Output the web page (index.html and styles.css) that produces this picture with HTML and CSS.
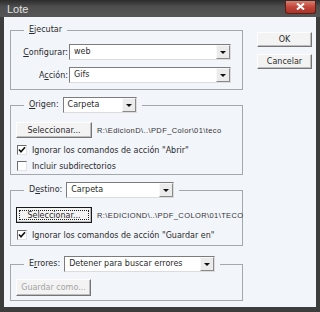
FILE: index.html
```html
<!DOCTYPE html>
<html lang="es">
<head>
    <meta charset="UTF-8">
    <title>Lote</title>
    <link rel="stylesheet" href="styles.css">
</head>
<body>
    <div class="window">
        <div class="titlebar">
            <span class="title">Lote</span>
            <span class="close">
                <svg width="9" height="7" viewBox="0 0 9 7"><path d="M1 0.5 L8 6.5 M8 0.5 L1 6.5" stroke="#fff" stroke-width="2"/></svg>
            </span>
        </div>

        <div class="client">
            <div class="groups">
                <fieldset class="group g-run">
                    <legend><span><u>E</u>jecutar</span></legend>
                    <div class="row">
                        <span class="lbl"><u>C</u>onfigurar:</span>
                        <div class="combo c-run"><span class="val">web</span><span class="arrow"></span></div>
                    </div>
                    <div class="row">
                        <span class="lbl">A<u>c</u>ción:</span>
                        <div class="combo c-run"><span class="val">Gifs</span><span class="arrow"></span></div>
                    </div>
                </fieldset>

                <fieldset class="group g-src">
                    <legend>
                        <span><u>O</u>rigen:</span>
                        <div class="combo c-src"><span class="val">Carpeta</span><span class="arrow"></span></div>
                    </legend>
                    <div class="pick">
                        <button class="btn b-pick">Seleccionar...</button>
                        <span class="path">R:\EdicionD\..\PDF_Color\01\teco</span>
                    </div>
                    <div class="check"><span class="box on"><svg width="8" height="8" viewBox="0 0 8 8"><path d="M1 3.5 L3 5.8 L7 1.2" stroke="#111" stroke-width="1.6" fill="none"/></svg></span><span>Ignorar los comandos de acción "Abrir"</span></div>
                    <div class="check"><span class="box"></span><span>Incluir subdirectorios</span></div>
                </fieldset>

                <fieldset class="group g-dst">
                    <legend>
                        <span>D<u>e</u>stino:</span>
                        <div class="combo c-dst"><span class="val">Carpeta</span><span class="arrow"></span></div>
                    </legend>
                    <div class="pick">
                        <button class="btn b-pick focus">Seleccionar...</button>
                        <span class="path">R:\EDICIOND\..\PDF_COLOR\01\TECO</span>
                    </div>
                    <div class="check"><span class="box on"><svg width="8" height="8" viewBox="0 0 8 8"><path d="M1 3.5 L3 5.8 L7 1.2" stroke="#111" stroke-width="1.6" fill="none"/></svg></span><span>Ignorar los comandos de acción "Guardar en"</span></div>
                </fieldset>

                <fieldset class="group g-err">
                    <legend>
                        <span>E<u>r</u>rores:</span>
                        <div class="combo c-err"><span class="val">Detener para buscar errores</span><span class="arrow"></span></div>
                    </legend>
                    <button class="btn b-save" disabled>Guardar como...</button>
                </fieldset>
            </div>

            <div class="actions">
                <button class="btn b-main">OK</button>
                <button class="btn b-main">Cancelar</button>
            </div>
        </div>
    </div>
</body>
</html>
```

FILE: styles.css
```css
body {
    margin: 0;
    font-family: "DejaVu Sans", Verdana, sans-serif;
    font-size: 8px;
    color: #2b2b2b;
    background: #3c3c3c;
}

.window {
    width: 320px;
    height: 312px;
    background: #3d3d3d;
    display: flex;
    flex-direction: column;
}

.titlebar {
    height: 17px;
    box-sizing: border-box;
    padding: 0 4px 0 7px;
    background: linear-gradient(#2c2c2c, #4e4e4e 40%, #565656);
    display: flex;
    align-items: center;
    justify-content: space-between;
}

.title {
    color: #e2e2e2;
    font-family: "Liberation Sans", Arial, sans-serif;
    font-size: 11px;
}

.close {
    width: 31px;
    height: 13px;
    margin-top: -3px;
    box-sizing: border-box;
    border: 1px solid #5c1d16;
    border-top: none;
    border-radius: 0 0 3px 3px;
    background: linear-gradient(#d9806f, #c2443a 50%, #a8342a);
    display: flex;
    align-items: center;
    justify-content: center;
}

.client {
    flex: 1;
    margin: 0 4px 5px 4px;
    padding: 7px 4px 0 6px;
    background: #f2f5fa;
    display: flex;
    gap: 14px;
}

.groups {
    width: 233px;
    display: flex;
    flex-direction: column;
}

.group {
    margin: 0;
    min-width: 0;
    border: 1px solid #a4a8ad;
}

legend {
    margin-left: 8px;
    padding: 0 5px;
    line-height: 12px;
    display: flex;
    align-items: center;
    gap: 4px;
}

.g-run {
    padding: 8px 11px 6px 5px;
}

.g-src {
    margin-top: 7px;
    padding: 9px 5px 0 5px;
}

.g-dst {
    margin-top: 7px;
    padding: 9px 5px 2px 5px;
}

.g-err {
    margin-top: 10px;
    padding: 7px 5px 4px 5px;
}

.row {
    display: flex;
    align-items: center;
    gap: 1px;
}

.row + .row {
    margin-top: 7px;
}

.lbl {
    width: 52px;
    text-align: right;
}

.combo {
    height: 16px;
    box-sizing: border-box;
    border: 1px solid;
    border-color: #7c7c7c #dcdcdc #dcdcdc #7c7c7c;
    background: #fff;
    display: flex;
    flex-shrink: 0;
}

.c-run { width: 162px; }
.c-src { width: 74px; }
.c-dst { width: 108px; }
.c-err { width: 151px; }

.val {
    flex: 1;
    padding-left: 4px;
    line-height: 14px;
    white-space: nowrap;
    overflow: hidden;
}

.arrow {
    width: 14px;
    box-sizing: border-box;
    border: 1px solid;
    border-color: #f8f8f8 #8a8a8a #8a8a8a #f8f8f8;
    background: #ebebeb;
    display: flex;
    align-items: center;
    justify-content: center;
}

.arrow::after {
    content: "";
    border-left: 3px solid transparent;
    border-right: 3px solid transparent;
    border-top: 3px solid #111;
}

.btn {
    font-family: inherit;
    font-size: 8px;
    color: #2b2b2b;
    padding: 0;
    box-sizing: border-box;
    border: 1px solid;
    border-color: #fdfdfd #767676 #767676 #fdfdfd;
    box-shadow: inset -1px -1px #bdbdbd;
    background: #f3f3f3;
    flex-shrink: 0;
}

.pick {
    display: flex;
    align-items: center;
    gap: 5px;
}

.b-pick {
    width: 76px;
    height: 16px;
}

.b-pick.focus {
    border-color: #1a1a1a;
    outline: 1px dotted #222;
    outline-offset: -4px;
}

.path {
    font-family: "Liberation Sans", Arial, sans-serif;
    font-size: 7.5px;
    letter-spacing: 0.4px;
    color: #333;
    white-space: nowrap;
}

.check {
    height: 16px;
    display: flex;
    align-items: center;
    gap: 5px;
    padding-left: 1px;
    white-space: nowrap;
}

.pick + .check {
    margin-top: 4px;
}

.box {
    width: 10px;
    height: 10px;
    box-sizing: border-box;
    border: 1px solid;
    border-color: #6d6d6d #e4e4e4 #e4e4e4 #6d6d6d;
    background: #fff;
    display: flex;
    align-items: center;
    justify-content: center;
}

.b-save {
    width: 75px;
    height: 17px;
    color: #a3a3a3;
}

.actions {
    width: 55px;
    padding-top: 8px;
    display: flex;
    flex-direction: column;
    gap: 7px;
}

.b-main {
    height: 15px;
}
```
